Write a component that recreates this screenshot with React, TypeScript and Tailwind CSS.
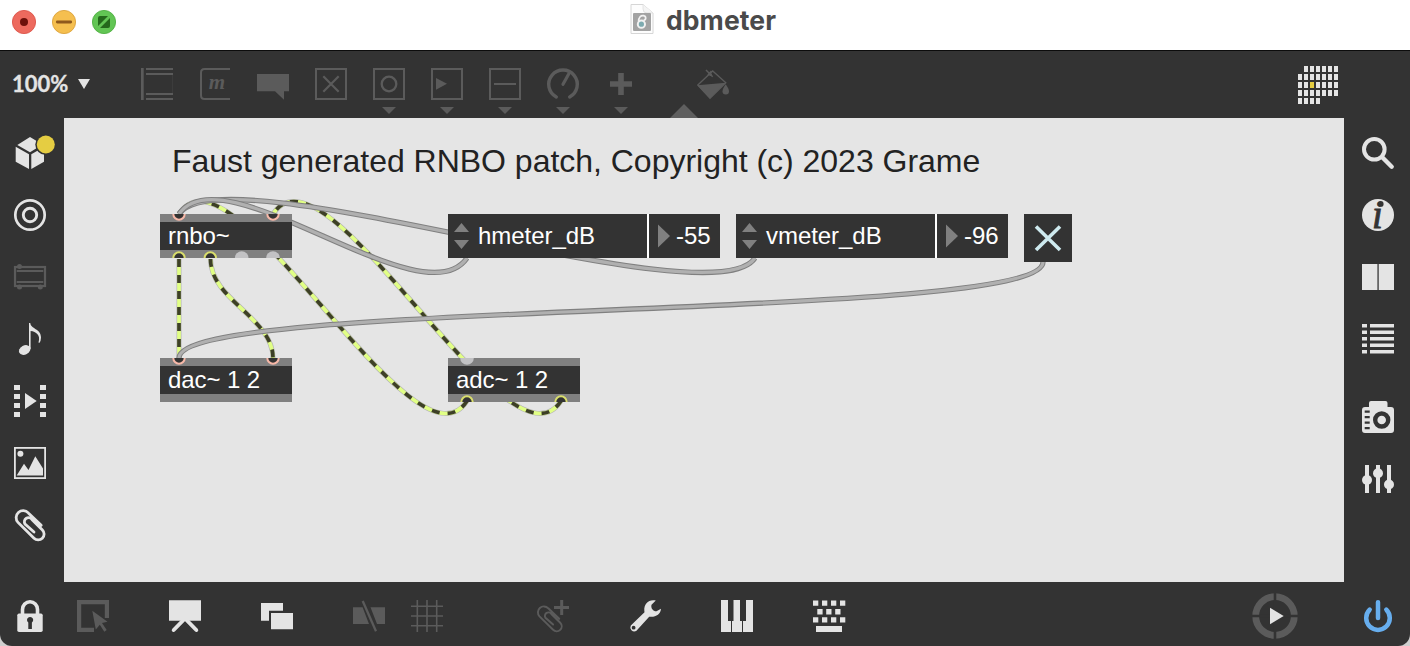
import type { ReactNode } from "react";

const BRIGHT = "#e4e4e4";
const DIM = "#5b5b5b";
const BG = "#333333";

function Icon({ children, color = BRIGHT }: { children: ReactNode; color?: string }) {
  return (
    <svg className="block size-8 shrink-0 overflow-visible" viewBox="0 0 32 32" fill={color}>
      {children}
    </svg>
  );
}

const CLIP =
  "M27.2 16.2 L14.3 3.9 A6.9 6.9 0 0 0 4 13.4 L20 29.2 A5.5 5.5 0 0 0 28.4 20.9 L18 10.6 A3.9 3.9 0 0 0 11 15 L20 23";

function Frame({ children, menu = false }: { children?: ReactNode; menu?: boolean }) {
  return (
    <Icon color={DIM}>
      <rect x="1" y="1" width="30" height="30" fill="none" stroke={DIM} strokeWidth="2" />
      {children}
      {menu && <MenuArrow />}
    </Icon>
  );
}

function MenuArrow() {
  return <path d="M9 39 H23 L16 46 Z" />;
}

function TitleBar() {
  return (
    <div className="relative flex h-[50px] shrink-0 items-start bg-white">
      <div className="flex gap-4 pt-[10px] pl-3">
        <svg className="size-6" viewBox="0 0 24 24">
          <circle cx="12" cy="12" r="11.6" fill="#ed6a5e" stroke="#dc5549" strokeWidth=".9" />
          <circle cx="12" cy="12" r="4" fill="#6d100a" />
        </svg>
        <svg className="size-6" viewBox="0 0 24 24">
          <circle cx="12" cy="12" r="11.6" fill="#f5bf4f" stroke="#dba33c" strokeWidth=".9" />
          <path d="M5.3 12 H18.7" stroke="#8f591d" strokeWidth="2.8" strokeLinecap="round" />
        </svg>
        <svg className="size-6" viewBox="0 0 24 24">
          <circle cx="12" cy="12" r="11.6" fill="#62c554" stroke="#50b043" strokeWidth=".9" />
          <path d="M6 16 V8 Q6 6 8 6 H16 Z M8 18 H16 Q18 18 18 16 V8 Z" fill="#24681b" />
        </svg>
      </div>
      <div className="flex gap-3 pt-1 pl-[514px]">
        <svg className="h-[31px] w-6" viewBox="0 0 24 31">
          <path d="M1 .5 H13 L23 9 V29.5 H1 Z" fill="#fdfdfd" stroke="#d6d6d6" />
          <path d="M13 .5 V5 Q13 9 17 9 H23" fill="#f4f4f4" stroke="#dedede" strokeWidth=".8" />
          <rect x="3" y="9" width="18" height="18" rx="1" fill="#a3a3a3" />
          <circle cx="11.4" cy="20.2" r="3.6" fill="#7dabb0" stroke="#f2f2f2" strokeWidth="2" />
          <path d="M8.6 17.6 C8.600 13 11 11.200 13.500 11.600 C16.400 12.200 16.400 16 13.600 16.400" fill="none" stroke="#f2f2f2" strokeWidth="1.7" />
        </svg>
        <div className="-mt-0.5 font-['Inter'] text-[26.5px] leading-[36px] font-bold tracking-[0.1px] text-[#4a4a4a]">dbmeter</div>
      </div>
    </div>
  );
}

function Matrix() {
  const rows = [
    [1, 6],
    [0, 6],
    [0, 6],
    [0, 6],
    [0, 3],
  ];
  return (
    <svg className="-mt-[2px] mr-[72px] ml-auto h-[38px] w-10" viewBox="0 0 40 38">
      {rows.map(([a, b], r) =>
        Array.from({ length: b - a + 1 }, (_, i) => (
          <rect key={`${r}-${i}`} x={(a + i) * 6} y={r * 8} width="4" height="6" fill={r === 2 && a + i === 2 ? "#e5cd42" : BRIGHT} />
        )),
      )}
    </svg>
  );
}

function TopBar() {
  return (
    <div className="relative flex h-[68px] shrink-0 items-start border-t border-[#0c0c0c] bg-[#333333] pt-[17px] pl-[12px]">
      <div className="flex w-[129px] shrink-0 items-center">
        <span className="w-[66px] font-['Lato'] text-[22px] leading-[31px] font-bold text-[#e4e4e4] [-webkit-text-stroke:0.3px_#e4e4e4]">100%</span>
        <svg className="h-[10px] w-3" viewBox="0 0 12 10">
          <path d="M0 0 H12 L6 10 Z" fill={BRIGHT} />
        </svg>
      </div>
      <div className="flex gap-[26px]">
        <Icon color={DIM}>
          <path d="M0 0h2.7v32H0zM5 0h27v2H5zM5 5h27v2H5zM5 25h27v2H5zM5 30h27v2H5z" />
          <path d="M31 7h1v18h-1z" fill="#3c3c3c" />
        </Icon>
        <Icon color={DIM}>
          <path d="M31 1 H5.500 Q2 1 2 4.500 V27.500 Q2 31 5.500 31 H31" fill="none" stroke={DIM} strokeWidth="2" />
          <text x="18" y="21" textAnchor="middle" className="font-['Liberation_Serif'] text-[21px] font-bold italic">m</text>
        </Icon>
        <Icon color={DIM}>
          <path d="M0 6h32v17.300h-5v8.400l-9-8.400H0z" />
        </Icon>
        <Frame>
          <path d="M8.300 8.300 L23.700 23.700 M23.700 8.300 L8.300 23.700" stroke={DIM} strokeWidth="2.200" />
        </Frame>
        <Frame menu>
          <circle cx="16" cy="16" r="7.300" fill="none" stroke={DIM} strokeWidth="2.300" />
        </Frame>
        <Frame menu>
          <path d="M5 10 L16 15.800 L5 21.700 Z" />
        </Frame>
        <Frame menu>
          <path d="M5 15h22v2H5z" />
        </Frame>
        <Icon color={DIM}>
          <path d="M9.300 29 A14.300 14.300 0 1 1 22.700 29" fill="none" stroke={DIM} strokeWidth="3.400" strokeLinecap="round" />
          <path d="M16 16.300 L22 5.500" stroke={DIM} strokeWidth="3.200" strokeLinecap="round" />
          <MenuArrow />
        </Icon>
        <Icon color={DIM}>
          <path d="M13.200 5h5.600v8.200H27v5.600h-8.200V27h-5.600v-8.200H5v-5.600h8.200z" />
          <MenuArrow />
        </Icon>
      </div>
      <div className="ml-[60px]">
        <Icon color={DIM}>
          <path d="M.8 17 L15.700 3 L28.800 14.700 L13 30.300 Z" fill="none" stroke={DIM} strokeWidth="1.300" />
          <path d="M.3 17.300 L29 14.700 L13 30.300 Z" />
          <path d="M9 2 L15.700 8.700 M14.500 3 L11 7" stroke={DIM} strokeWidth="1.500" />
          <circle cx="13.500" cy="6.500" r="1.500" />
          <path d="M28.700 16.300 Q32 21 32 23.300 A3.200 3.200 0 0 1 25.500 23.300 Q25.500 21 28.700 16.300Z" />
        </Icon>
      </div>
      <Matrix />
      <svg className="absolute bottom-0 left-[670px] h-[14px] w-7" viewBox="0 0 28 14">
        <path d="M0 14 L14 0 L28 14 Z" fill="#5f5f5f" />
      </svg>
    </div>
  );
}

function LeftBar() {
  return (
    <div className="flex w-16 shrink-0 flex-col gap-[30px] pt-[19px] pl-[14px]">
      <Icon>
        <path d="M16 0 L28.500 7.500 L16 15.300 L3.300 8 Z M1.700 9.700 L15 17.300 V32 L1.700 24.700 Z M17.300 17.300 L30 10 V24.700 L17.300 32 Z" />
        <circle cx="31.800" cy="7.500" r="10.500" fill={BG} />
        <circle cx="31.800" cy="7.500" r="9" fill="#e5cd42" />
      </Icon>
      <Icon>
        <circle cx="16" cy="16" r="14.700" fill="none" stroke={BRIGHT} strokeWidth="2.700" />
        <circle cx="16" cy="16" r="6.700" fill="none" stroke={BRIGHT} strokeWidth="2.900" />
      </Icon>
      <Icon color={DIM}>
        <rect x="1" y="6" width="30" height="19" fill="none" stroke={DIM} strokeWidth="2.200" />
        <path d="M2.700 9h26.600v2H2.700zM2.700 20h26.600v2H2.700z" />
        <circle cx="5.500" cy="5.500" r="2.500" />
        <circle cx="5.500" cy="26" r="2.500" />
        <circle cx="26.300" cy="26" r="2.500" />
      </Icon>
      <Icon>
        <path d="M15 0 H16.300 C16.500 6 27 5.500 27 14.500 Q27 18 25.300 20 L24.500 19.500 C27 12 22 8.500 16.600 8 V26 H15 Z" />
        <ellipse cx="10.700" cy="27" rx="6.100" ry="4.500" transform="rotate(-28 10.700 27)" />
      </Icon>
      <Icon>
        {[0, 9, 18, 27].map((y) => (
          <path key={y} d={`M0 ${y}h6v5H0zM26 ${y}h6v5h-6z`} />
        ))}
        <path d="M11 8 L22.700 16 L11 24 Z" />
      </Icon>
      <Icon>
        <rect x=".9" y=".9" width="30.200" height="30.200" fill="none" stroke={BRIGHT} strokeWidth="1.800" />
        <circle cx="6.400" cy="6.800" r="3" />
        <path d="M2.700 28.500 L10 16.700 L14.500 23 L21.300 9.300 L29 21.500 V28.500 Z" />
      </Icon>
      <Icon>
        <path d={CLIP} fill="none" stroke={BRIGHT} strokeWidth="2.800" strokeLinecap="round" />
      </Icon>
    </div>
  );
}

function RightBar() {
  return (
    <div className="flex w-[66px] shrink-0 flex-col gap-[30px] pt-[19px] pl-[18px]">
      <Icon>
        <circle cx="12.300" cy="12.300" r="10.300" fill="none" stroke={BRIGHT} strokeWidth="4" />
        <path d="M20.500 20.500 L29.700 29.700" stroke={BRIGHT} strokeWidth="4.400" strokeLinecap="round" />
      </Icon>
      <Icon>
        <circle cx="16" cy="16" r="16" />
        <text x="15.500" y="28.700" textAnchor="middle" fill={BG} stroke={BG} strokeWidth=".9" className="font-['Liberation_Serif'] text-[39px] italic">i</text>
        <circle cx="18.700" cy="4.900" r="2.900" fill={BG} />
      </Icon>
      <Icon>
        <path d="M0 3h32v26H0z" />
        <path d="M15.200 3h1.800v26h-1.800z" fill="#666" />
      </Icon>
      <Icon>
        {[1, 7.5, 14, 20.5, 27].map((y) => (
          <path key={y} d={`M0 ${y}h5v3.500H0zM8 ${y}h24v3.500H8z`} />
        ))}
      </Icon>
      <div className="pt-4">
        <Icon>
          <path d="M7 6 V2 Q7 0 9 0 H23.500 Q25.500 0 25.500 2 V6 H29 Q32 6 32 9 V29 Q32 32 29 32 H3 Q0 32 0 29 V9 Q0 6 3 6 Z" />
          <circle cx="19.700" cy="19" r="6.500" fill="none" stroke={BG} strokeWidth="4.400" />
          <path d="M2.700 9.500h5v2.300h-5zM2.700 15h5v2.300h-5zM2.700 20.500h5v2.300h-5zM2.700 26h5v2.300h-5z" fill={BG} />
        </Icon>
      </div>
      <Icon>
        <path d="M3 2h4v28H3zM14 2h4v28h-4zM25 2h4v28h-4z" />
        <circle cx="5" cy="17" r="5" />
        <circle cx="16" cy="10.300" r="5" />
        <circle cx="27" cy="21.500" r="5" />
      </Icon>
    </div>
  );
}

type WireProps = { d: string };

function PatchCord({ d }: WireProps) {
  return (
    <g fill="none">
      <path d={d} stroke="#808080" strokeWidth="5.300" />
      <path d={d} stroke="#b0b0b0" strokeWidth="3.200" />
    </g>
  );
}

function SignalCord({ d }: WireProps) {
  return (
    <g fill="none">
      <path d={d} stroke="#b4b4b4" strokeWidth="5" />
      <path d={d} stroke="#e1ff85" strokeWidth="3.700" />
      <path d={d} stroke="#3d3f27" strokeWidth="3.700" strokeDasharray="8 8" />
    </g>
  );
}

type PortKind = "inlet" | "outlet" | "free";

function Port({ x, y, kind }: { x: number; y: number; kind: PortKind }) {
  if (kind === "free") return <circle cx={x} cy={y} r="6.800" fill="#c2c2c4" />;
  return <circle cx={x} cy={y} r="5.700" fill={BG} stroke={kind === "inlet" ? "#f7b8a8" : "#d9de6c"} strokeWidth="2" />;
}

function ObjectBox({
  label,
  className,
  inlets,
  outlets,
}: {
  label: string;
  className: string;
  inlets: [number, PortKind][];
  outlets: [number, PortKind][];
}) {
  return (
    <div className={`absolute flex h-11 w-[132px] flex-col bg-[#333333] ${className}`}>
      <svg className="block h-2 w-full bg-[#808080]" viewBox="0 0 132 8">
        {inlets.map(([x, kind]) => (
          <Port key={x} x={x} y={0} kind={kind} />
        ))}
      </svg>
      <div className="h-7 pl-2 text-2xl leading-7 tracking-[-0.1px] text-white">{label}</div>
      <svg className="block h-2 w-full bg-[#808080]" viewBox="0 0 132 8">
        {outlets.map(([x, kind]) => (
          <Port key={x} x={x} y={8} kind={kind} />
        ))}
      </svg>
    </div>
  );
}

function ParamBox({ name, value, className }: { name: string; value: string; className: string }) {
  return (
    <div className={`absolute flex h-11 w-[272px] gap-[2px] bg-white text-2xl leading-[43px] tracking-[-0.05px] text-white ${className}`}>
      <div className="flex w-[199px] bg-[#333333]">
        <svg className="mr-[9px] ml-[6px] h-11 w-[15px]" viewBox="0 0 15 44" fill="#808080">
          <path d="M0 18 L7.500 9 L15 18 Z M0 26 H15 L7.500 35 Z" />
        </svg>
        {name}
      </div>
      <div className="flex flex-1 bg-[#333333]">
        <svg className="mr-[6px] ml-[9px] h-11 w-3" viewBox="0 0 12 44" fill="#808080">
          <path d="M0 10.500 L12 22 L0 33.500 Z" />
        </svg>
        {value}
      </div>
    </div>
  );
}

function Patcher() {
  return (
    <div className="relative flex-1 overflow-hidden bg-[#e5e5e5] font-['Liberation_Sans',sans-serif]">
      <svg className="absolute inset-0 h-[464px] w-[1280px]" viewBox="64 118 1280 464">
        <SignalCord d="M467 401 C414 483 232 132 179 214" />
        <SignalCord d="M179 259 V358" />
        <SignalCord d="M210.500 259 C210.500 300 273 318 273 358" />
        <SignalCord d="M561 401 C508 483 326 132 273 214" />
        <PatchCord d="M755 258 C712 322 222 150 179 214" />
        <PatchCord d="M467 258 C423 322 223 150 179 214" />
        <PatchCord d="M1043 262 C1043 322 179 298 179 358" />
      </svg>
      <div className="absolute top-[24px] left-[108px] text-[32px] leading-[38px] tracking-[-0.02px] whitespace-nowrap text-[#222222]">
        Faust generated RNBO patch, Copyright (c) 2023 Grame
      </div>
      <ObjectBox
        label="rnbo~"
        className="top-24 left-24"
        inlets={[[19, "inlet"], [113, "inlet"]]}
        outlets={[[19, "outlet"], [50.3, "outlet"], [81.7, "free"], [113, "free"]]}
      />
      <ObjectBox label="dac~ 1 2" className="top-60 left-24" inlets={[[19, "inlet"], [113, "inlet"]]} outlets={[]} />
      <ObjectBox label="adc~ 1 2" className="top-60 left-96" inlets={[[19, "free"]]} outlets={[[19, "outlet"], [113, "outlet"]]} />
      <ParamBox name="hmeter_dB" value="-55" className="top-24 left-96" />
      <ParamBox name="vmeter_dB" value="-96" className="top-24 left-[672px]" />
      <svg className="absolute top-24 left-[960px] size-12 bg-[#333333]" viewBox="0 0 48 48">
        <path d="M12 12.500 L36 36 M36 12.500 L12 36" stroke="#ceeaef" strokeWidth="3.600" />
      </svg>
    </div>
  );
}

function BottomBar() {
  return (
    <div className="flex h-16 shrink-0 items-start pt-[18px] pr-4 pl-[14px]">
      <Icon>
        <rect x="3.300" y="13.500" width="25.400" height="18.500" rx="1.700" />
        <path d="M8.500 14 V9.500 A7.500 7.700 0 0 1 23.500 9.500 V14" fill="none" stroke={BRIGHT} strokeWidth="3.600" />
        <path d="M14.300 29 V22.500 A3.100 3.100 0 1 1 17.900 22.500 V29 Z" fill={BG} />
      </Icon>
      <div className="ml-[31px] flex gap-[60px]">
        <Icon color={DIM}>
          <path d="M29.900 18 V2.100 H2.100 V29.900 H17" fill="none" stroke={DIM} strokeWidth="4.200" />
          <path d="M15.300 10.700 L30.500 21.800 L25 22.900 L29.700 30 L27.300 31.700 L22.800 24.800 L18.800 29.500 Z" />
        </Icon>
        <Icon>
          <path d="M0 .3h32v20.400H0z" />
          <path d="M4.700 30 L16 18.500 L27.300 30" fill="none" stroke={BRIGHT} strokeWidth="3.900" strokeLinecap="round" />
        </Icon>
        <Icon>
          <path d="M0 3h22v7.700H8v10H0zM10 13h22v16.300H10z" />
        </Icon>
        <Icon color={DIM}>
          <path d="M0 7.300 H9.600 L16 24 H0 Z M17.500 7.300 H32 V24 H24 Z" />
          <path d="M9.700 1 L23 31.300" stroke={DIM} strokeWidth="2.300" />
        </Icon>
      </div>
      <div className="ml-[26px]">
        <Icon color={DIM}>
          <path d="M6.300 0v32M16 0v32M25.700 0v32M0 6.300h32M0 16h32M0 25.700h32" stroke={DIM} strokeWidth="1.600" />
        </Icon>
      </div>
      <div className="ml-[94px] flex gap-[60px]">
        <Icon color={DIM}>
          <path d={CLIP} transform="translate(-.9 5) scale(.85)" fill="none" stroke={DIM} strokeWidth="2.300" strokeLinecap="round" />
          <path d="M24.700 0v15M17 7.500h15" stroke={DIM} strokeWidth="3" />
        </Icon>
        <Icon>
          <path d="M26.800 .6 C20 -1.200 14.800 4 15.300 10.500 L15.500 12.200 L1.800 25.400 A4.100 4.100 0 0 0 7.200 31 L20.200 16.700 C26.500 17.500 31.600 14.500 32 8.800 L27.500 11.300 C24.500 11.500 21.500 8.500 22.500 4.800 Z" />
          <circle cx="4.600" cy="27.700" r="1.900" fill={BG} />
        </Icon>
        <Icon>
          <path d="M0 0h7v21h3v11H0zM12.500 0h6.500v21h2v11H11V21h1.500zM25 0h7v32H22V21h3z" />
        </Icon>
        <Icon>
          {[0, 9, 18, 27].map((x) => (
            <path key={x} d={`M${x} .5h5.300v5.300h-5.300zM${x} 17.200h5.300v5.300h-5.300z`} />
          ))}
          <path d="M4.300 9h5.300v5.500h-5.300zM13.200 9h5.300v5.500h-5.300zM22.200 9h5.300v5.500h-5.300zM3 26h26v6H3z" />
        </Icon>
      </div>
      <svg className="-mt-[7px] mr-[64px] ml-auto size-[46px]" viewBox="0 0 46 46">
        <circle cx="23" cy="23" r="19.300" fill="none" stroke={DIM} strokeWidth="6.800" />
        <path d="M23 0v46M0 23h46" stroke={BG} strokeWidth="2.600" />
        <path d="M18 14.700 L31.700 23 L18 31.300 Z" fill={BRIGHT} />
      </svg>
      <Icon>
        <path d="M7.700 9.700 A11.800 11.800 0 1 0 24.300 9.700 M16 2.300 V18" fill="none" stroke="#67aeee" strokeWidth="4.500" strokeLinecap="round" />
      </Icon>
    </div>
  );
}

export default function App() {
  return (
    <div className="h-[646px] w-[1410px] overflow-hidden bg-[#cfcfcf]">
      <div className="flex h-full flex-col overflow-hidden rounded-b-[12px] bg-[#333333]">
        <TitleBar />
        <TopBar />
        <div className="flex h-[464px] shrink-0">
          <LeftBar />
          <Patcher />
          <RightBar />
        </div>
        <BottomBar />
      </div>
    </div>
  );
}
